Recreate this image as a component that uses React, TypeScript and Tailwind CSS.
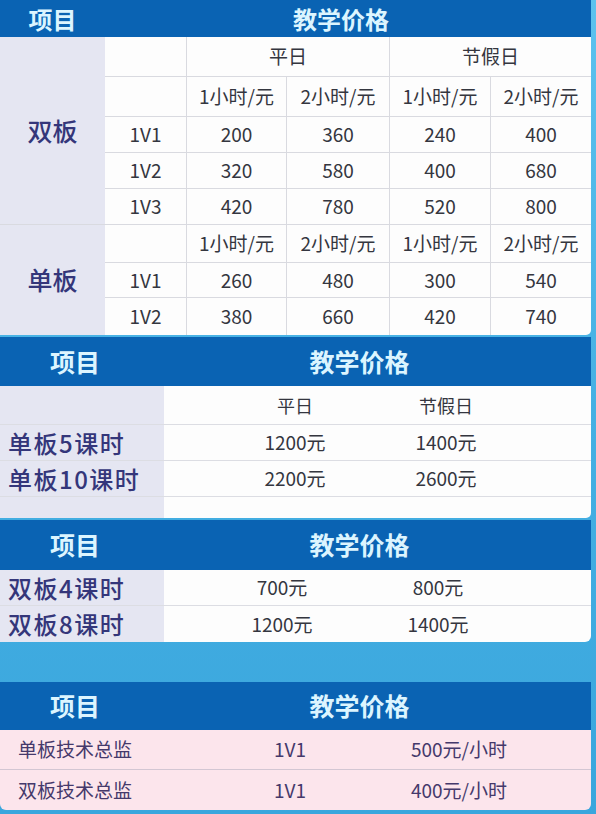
import React from 'react'

const font = { fontFamily: '"Noto Sans CJK SC", "Noto Sans", sans-serif' }

const cell = 'flex items-center justify-center bg-[#fdfdfd] border-[#d9dae0] text-[#34363f] text-[19px]'

function Header({ left, leftW, pr, h, size }: { left: string; leftW: string; pr: string; h: string; size: string }) {
  return (
    <div className={`flex w-[591px] bg-[#0a63b3] text-[#dcf5ff] font-bold ${h} ${size}`}>
      <div className={`flex items-center justify-center ${leftW}`}>{left}</div>
      <div className={`flex flex-1 items-center justify-center ${pr}`}>教学价格</div>
    </div>
  )
}

const hours = ['1小时/元', '2小时/元', '1小时/元', '2小时/元']

export default function App() {
  const doubleRows = [
    ['1V1', '200', '360', '240', '400'],
    ['1V2', '320', '580', '400', '680'],
    ['1V3', '420', '780', '520', '800'],
  ]
  const singleRows = [
    ['1V1', '260', '480', '300', '540'],
    ['1V2', '380', '660', '420', '740'],
  ]

  return (
    <div className="w-[596px] h-[814px] overflow-hidden bg-gradient-to-b from-[#5cc2ee] via-[#45b0e3] to-[#3aa6dd]" style={font}>
      {/* table 1 */}
      <Header left="项目" leftW="w-[105px]" pr="pr-[14px]" h="h-[37px]" size="text-[24px]" />
      <div className="grid w-[591px] grid-cols-[105px_82px_100px_103px_101px_100px] grid-rows-[40px_40px_36px_36px_36px_38px_35px_37px] rounded-br-[5px] overflow-hidden">
        <div className="row-span-5 flex items-center justify-center bg-[#e5e6f2] border-b border-[#d9dae0] text-[25px] font-medium text-[#34367a]">双板</div>
        <div className={`${cell} border-b border-r`} />
        <div className={`${cell} col-span-2 border-b border-r text-[18px]`}>平日</div>
        <div className={`${cell} col-span-2 border-b text-[18px]`}>节假日</div>
        <div className={`${cell} border-b border-r`} />
        {hours.map((t, i) => (
          <div key={i} className={`${cell} border-b ${i < 3 ? 'border-r' : ''}`}>{t}</div>
        ))}
        {doubleRows.map((r) =>
          r.map((t, i) => (
            <div key={r[0] + i} className={`${cell} border-b ${i < 4 ? 'border-r' : ''}`}>{t}</div>
          ))
        )}
        <div className="row-span-3 flex items-center justify-center bg-[#e5e6f2] text-[25px] font-medium text-[#34367a]">单板</div>
        <div className={`${cell} border-b border-r`} />
        {hours.map((t, i) => (
          <div key={'s' + i} className={`${cell} border-b ${i < 3 ? 'border-r' : ''}`}>{t}</div>
        ))}
        {singleRows.map((r, ri) =>
          r.map((t, i) => (
            <div key={'s' + r[0] + i} className={`${cell} ${ri === 0 ? 'border-b' : ''} ${i < 4 ? 'border-r' : ''}`}>{t}</div>
          ))
        )}
      </div>

      {/* table 2 */}
      <div className="mt-[2px]">
        <Header left="项目" leftW="w-[150px]" pr="pr-[22px]" h="h-[49px]" size="text-[25px]" />
      </div>
      <div className="w-[591px] rounded-br-[5px] overflow-hidden">
        {[
          { h: 'h-[39px]', label: '', a: '平日', b: '节假日', small: true },
          { h: 'h-[36px]', label: '单板5课时', a: '1200元', b: '1400元' },
          { h: 'h-[36px]', label: '单板10课时', a: '2200元', b: '2600元' },
          { h: 'h-[21px]', label: '', a: '', b: '', last: true },
        ].map((r, i) => (
          <div key={i} className={`flex ${r.h} ${r.last ? '' : 'border-b border-[#dcdde3]'}`}>
            <div className="flex w-[164px] items-center bg-[#e5e6f2] pl-[8px] text-[24px] font-medium tracking-[1.5px] text-[#34367a]">{r.label}</div>
            <div className={`flex flex-1 bg-[#fdfdfd] pl-[56px] text-[#34363f] ${r.small ? 'text-[18px]' : 'text-[19px]'}`}>
              <div className="flex w-[150px] items-center justify-center">{r.a}</div>
              <div className="flex w-[152px] items-center justify-center">{r.b}</div>
            </div>
          </div>
        ))}
      </div>

      {/* table 3 */}
      <div className="mt-[2px]">
        <Header left="项目" leftW="w-[150px]" pr="pr-[22px]" h="h-[50px]" size="text-[25px]" />
      </div>
      <div className="w-[591px] rounded-br-[6px] overflow-hidden">
        {[
          { label: '双板4课时', a: '700元', b: '800元' },
          { label: '双板8课时', a: '1200元', b: '1400元' },
        ].map((r, i) => (
          <div key={i} className={`flex h-[36px] ${i === 0 ? 'border-b border-[#dcdde3]' : ''}`}>
            <div className="flex w-[164px] items-center bg-[#e5e6f2] pl-[8px] text-[24px] font-medium tracking-[1.5px] text-[#34367a]">{r.label}</div>
            <div className="flex flex-1 bg-[#fdfdfd] pl-[43px] text-[19px] text-[#34363f]">
              <div className="flex w-[150px] items-center justify-center">{r.a}</div>
              <div className="flex w-[162px] items-center justify-center">{r.b}</div>
            </div>
          </div>
        ))}
      </div>

      {/* table 4 */}
      <div className="mt-[40px]">
        <Header left="项目" leftW="w-[150px]" pr="pr-[22px]" h="h-[48px]" size="text-[25px]" />
      </div>
      <div className="w-[591px] rounded-b-[6px] overflow-hidden bg-[#fce5ec] text-[19px] text-[#45396b]">
        {[
          { label: '单板技术总监', a: '1V1', b: '500元/小时' },
          { label: '双板技术总监', a: '1V1', b: '400元/小时' },
        ].map((r, i) => (
          <div key={i} className={`flex h-[40px] items-center ${i === 0 ? 'border-b border-[#d3c6d3]' : ''}`}>
            <div className="w-[230px] pl-[18px]">{r.label}</div>
            <div className="w-[120px] text-center">{r.a}</div>
            <div className="w-[218px] text-center">{r.b}</div>
          </div>
        ))}
      </div>
    </div>
  )
}
